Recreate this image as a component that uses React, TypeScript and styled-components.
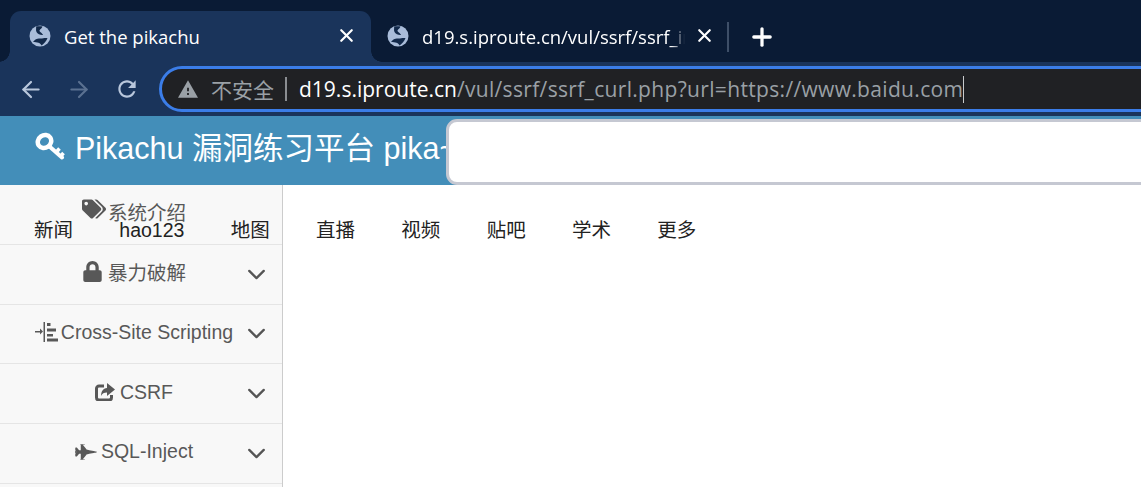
import React, { FC, ReactNode } from 'react';
import styled, { createGlobalStyle } from 'styled-components';
import { ArrowLeft, ArrowRight, ChevronDown, Plus, X } from 'lucide-react';
import { FaFighterJet, FaLock, FaTags } from 'react-icons/fa';

const GlobalStyle = createGlobalStyle`
  html, body {
    margin: 0;
    padding: 0;
    height: 100%;
    overflow: hidden;
    background: #fff;
  }
`;

const Page = styled.div`
  display: flex;
  flex-direction: column;
  width: 1141px;
  height: 487px;
  overflow: hidden;
`;

const TabStrip = styled.div`
  display: flex;
  align-items: flex-end;
  height: 62px;
  padding-left: 10px;
  background: #0a1b35;
  font-family: 'Open Sans', 'Noto Sans CJK SC', sans-serif;
`;

const ActiveTab = styled.div`
  position: relative;
  display: flex;
  align-items: center;
  width: 361px;
  height: 51px;
  padding: 0 14px 2px 19px;
  box-sizing: border-box;
  border-radius: 11px 11px 0 0;
  background: #1a345b;

  &::before,
  &::after {
    content: '';
    position: absolute;
    bottom: 0;
    width: 11px;
    height: 11px;
  }
  &::before {
    left: -11px;
    background: radial-gradient(circle at 0 0, #0a1b35 10.5px, #1a345b 11px);
  }
  &::after {
    right: -11px;
    background: radial-gradient(circle at 100% 0, #0a1b35 10.5px, #1a345b 11px);
  }
`;

const IdleTab = styled.div`
  display: flex;
  align-items: center;
  width: 357px;
  height: 51px;
  padding: 0 13px 2px 16px;
  box-sizing: border-box;
`;

const TabTitle = styled.span<{ $faded?: boolean }>`
  flex: 1;
  margin: 2px 9px 0 13px;
  overflow: hidden;
  white-space: nowrap;
  color: #fff;
  font-size: 18.5px;
  mask-image: ${({ $faded }) =>
    $faded ? 'linear-gradient(to right, #000 95%, transparent 100%)' : 'none'};
`;

const CloseIcon = styled(X)`
  flex-shrink: 0;
  color: #fff;
`;

const TabDivider = styled.div`
  align-self: flex-end;
  width: 2px;
  height: 30px;
  margin: 0 0 10px -1px;
  background: #3e4f68;
`;

const NewTab = styled(Plus)`
  align-self: flex-end;
  margin: 0 0 11px 19px;
  color: #fff;
`;

const Toolbar = styled.div`
  display: flex;
  align-items: center;
  height: 54px;
  padding-left: 18px;
  background: #1a345b;
  overflow: hidden;
  flex-shrink: 0;
`;

const NavButton = styled.div<{ $dim?: boolean }>`
  display: flex;
  justify-content: center;
  width: 26px;
  margin-right: 22px;
  color: ${({ $dim }) => ($dim ? '#5b7191' : '#b9c7dc')};
`;

const Omnibox = styled.div`
  display: flex;
  align-items: center;
  flex-shrink: 0;
  width: 1040px;
  height: 46px;
  margin-left: -3px;
  padding-left: 16px;
  box-sizing: border-box;
  border: 3px solid #3b7de8;
  border-radius: 23px;
  background: #202124;
  font-family: 'Open Sans', 'Noto Sans CJK SC', sans-serif;
  font-size: 21px;
`;

const SecurityLabel = styled.span`
  margin-left: 13px;
  color: #9aa0a6;
  font-family: 'Noto Sans CJK SC', sans-serif;
`;

const OmniDivider = styled.div`
  width: 2px;
  height: 24px;
  margin: 0 12px 0 11px;
  background: #8a8d91;
`;

const UrlHost = styled.span`
  color: #fff;
`;

const UrlRest = styled.span`
  color: #9aa0a6;
  letter-spacing: 0.33px;
`;

const Caret = styled.div`
  width: 1px;
  height: 27px;
  background: #c8cacc;
`;

const Navbar = styled.div`
  display: flex;
  flex-shrink: 0;
  height: 69px;
  background: #438eb9;
  overflow: hidden;
`;

const Brand = styled.div`
  display: flex;
  align-items: center;
  flex-shrink: 0;
  width: 411px;
  margin: 0 0 9px 35px;
  overflow: hidden;
  white-space: nowrap;
  color: #fff;
  font-family: 'Liberation Sans', 'Noto Sans CJK SC', sans-serif;
  font-size: 30.5px;
`;

const KeySvg = styled.svg`
  flex-shrink: 0;
  margin-right: 10px;
`;

const SearchBox = styled.div`
  flex-shrink: 0;
  width: 800px;
  height: 66px;
  margin-top: 2.5px;
  box-sizing: border-box;
  border: 3px solid #c5c8d2;
  border-radius: 11px;
  background: #fff;
`;

const Main = styled.div`
  position: relative;
  display: flex;
  flex: 1;
  min-height: 0;
`;

const Sidebar = styled.div`
  display: flex;
  flex-direction: column;
  width: 283px;
  box-sizing: border-box;
  border-right: 1px solid #cccccc;
  background: #f8f8f8;
`;

const SideRow = styled.div`
  display: grid;
  align-items: center;
  flex-shrink: 0;
  height: 59.75px;
  box-sizing: border-box;
  padding-right: 14px;
  border-bottom: 1px solid #e5e5e5;
  color: #585858;
  font-family: 'Liberation Sans', 'Noto Sans CJK SC', sans-serif;
  font-size: 19.5px;
`;

const SideLabel = styled.div<{ $gap: number; $lift: number }>`
  grid-area: 1 / 1;
  display: flex;
  align-items: center;
  justify-content: center;
  gap: ${({ $gap }) => $gap}px;
  margin-bottom: ${({ $lift }) => $lift}px;
`;

const SideChevron = styled(ChevronDown)`
  grid-area: 1 / 1;
  justify-self: end;
  margin-right: -2.5px;
  color: #555;
`;

const TagsIcon = styled(FaTags)`
  margin-bottom: 5px;
`;

const BaiduLinks = styled.div`
  position: absolute;
  top: 33px;
  left: 34px;
  display: flex;
  gap: 46.3px;
  color: #222;
  font-family: 'Liberation Sans', 'Noto Sans CJK SC', sans-serif;
  font-size: 19.5px;
  line-height: 24px;
  white-space: nowrap;
`;

const Globe: FC = () => (
  <svg width="22" height="22" viewBox="0 0 22 22" style={{ flexShrink: 0 }}>
    <circle cx="11" cy="11" r="10.5" fill="#a9bcd9" />
    <path
      d="M7 1.500C9.500 1 12 1 13.500 1.500 13 3.500 11 4 10.500 5.500 10.200 7 13.500 8 14 10 12 10.500 8.500 9 7.500 7 6.500 5 7.500 3 7 1.500z"
      fill="#12294a"
    />
    <path
      d="M4 17C6 14 9 13 11 13.500 13 14 15 12.500 18.500 13 17.500 16 15 18.500 12.500 20.500 12 18 8 17 4 17z"
      fill="#12294a"
    />
  </svg>
);

const ReloadIcon: FC = () => (
  <svg width="30" height="30" viewBox="0 0 24 24" fill="#b9c7dc">
    <path d="M17.65 6.35C16.2 4.9 14.21 4 12 4c-4.42 0-7.99 3.58-7.99 8s3.57 8 7.99 8c3.73 0 6.84-2.55 7.73-6h-2.08c-.82 2.33-3.04 4-5.65 4-3.31 0-6-2.69-6-6s2.69-6 6-6c1.66 0 3.14.69 4.22 1.78L13 11h7V4l-2.35 2.35z" />
  </svg>
);

const WarningIcon: FC = () => (
  <svg width="20" height="18" viewBox="1 2 22 19" fill="#9aa0a6">
    <path d="M1 21h22L12 2 1 21zm12-3h-2v-2h2v2zm0-4h-2v-4h2v4z" />
  </svg>
);

const KeyIcon: FC = () => (
  <KeySvg width="30" height="28" viewBox="0 0 30 28" fill="none" stroke="#fff">
    <ellipse cx="9.500" cy="9.500" rx="7" ry="6.200" strokeWidth="4.500" transform="rotate(-35 9.500 9.500)" />
    <path d="M14.500 14.500L27 25.500" strokeWidth="4" strokeLinecap="round" />
    <path d="M21 20.500L24.500 16.500M25.500 24.500L28.500 21" strokeWidth="3.500" />
  </KeySvg>
);

const IndentIcon: FC = () => (
  <svg width="23" height="20" viewBox="0 0 23 20" fill="#585858">
    <rect x="0" y="9" width="6" height="1.500" />
    <path d="M5 6.500l3 3-3 3z" />
    <rect x="8.500" y="0" width="1.500" height="20" />
    <rect x="12" y="1" width="3.500" height="3" />
    <rect x="12" y="6.500" width="9" height="3" />
    <rect x="12" y="12" width="6" height="2.500" />
    <rect x="12" y="16.500" width="11" height="3" />
  </svg>
);

const ShareIcon: FC = () => (
  <svg width="20" height="18" viewBox="0 0 20 18">
    <path
      d="M9 3H4a2.500 2.500 0 0 0-2.500 2.500v9A2.500 2.500 0 0 0 4 17h10a2.500 2.500 0 0 0 2.500-2.500V12"
      fill="none"
      stroke="#585858"
      strokeWidth="3"
    />
    <path d="M12 0l8 6.500-8 6.500V9.500C9 9.500 7 10.500 6 13c0-4.500 2-7.500 6-8z" fill="#585858" />
  </svg>
);

interface MenuItem {
  label: string;
  icon: ReactNode;
  gap: number;
  lift: number;
  hasChildren: boolean;
}

const menu: MenuItem[] = [
  { label: '系统介绍', icon: <TagsIcon size={24} />, gap: 2, lift: 5, hasChildren: false },
  { label: '暴力破解', icon: <FaLock size={21} />, gap: 5, lift: 5, hasChildren: true },
  { label: 'Cross-Site Scripting', icon: <IndentIcon />, gap: 3, lift: 3, hasChildren: true },
  { label: 'CSRF', icon: <ShareIcon />, gap: 5, lift: 3, hasChildren: true },
  { label: 'SQL-Inject', icon: <FaFighterJet size={22} />, gap: 4, lift: 3, hasChildren: true },
];

const baiduLinks = ['新闻', 'hao123', '地图', '直播', '视频', '贴吧', '学术', '更多'];

const App: FC = () => {
  return (
    <Page>
      <GlobalStyle />
      <TabStrip>
        <ActiveTab>
          <Globe />
          <TabTitle>Get the pikachu</TabTitle>
          <CloseIcon size={21} strokeWidth={2.5} />
        </ActiveTab>
        <IdleTab>
          <Globe />
          <TabTitle $faded>d19.s.iproute.cn/vul/ssrf/ssrf_info.php</TabTitle>
          <CloseIcon size={21} strokeWidth={2.5} />
        </IdleTab>
        <TabDivider />
        <NewTab size={28} strokeWidth={2.8} />
      </TabStrip>
      <Toolbar>
        <NavButton>
          <ArrowLeft size={27} strokeWidth={2} />
        </NavButton>
        <NavButton $dim>
          <ArrowRight size={27} strokeWidth={2} />
        </NavButton>
        <NavButton>
          <ReloadIcon />
        </NavButton>
        <Omnibox>
          <WarningIcon />
          <SecurityLabel>不安全</SecurityLabel>
          <OmniDivider />
          <UrlHost>d19.s.iproute.cn</UrlHost>
          <UrlRest>/vul/ssrf/ssrf_curl.php?url=https://www.baidu.com</UrlRest>
          <Caret />
        </Omnibox>
      </Toolbar>
      <Navbar>
        <Brand>
          <KeyIcon />
          Pikachu 漏洞练习平台 pika~ pika~
        </Brand>
        <SearchBox />
      </Navbar>
      <Main>
        <Sidebar>
          {menu.map((item) => (
            <SideRow key={item.label}>
              <SideLabel $gap={item.gap} $lift={item.lift}>
                {item.icon}
                <span>{item.label}</span>
              </SideLabel>
              {item.hasChildren && <SideChevron size={29} strokeWidth={1.9} />}
            </SideRow>
          ))}
        </Sidebar>
        <BaiduLinks>
          {baiduLinks.map((link) => (
            <span key={link}>{link}</span>
          ))}
        </BaiduLinks>
      </Main>
    </Page>
  );
};

export default App;
